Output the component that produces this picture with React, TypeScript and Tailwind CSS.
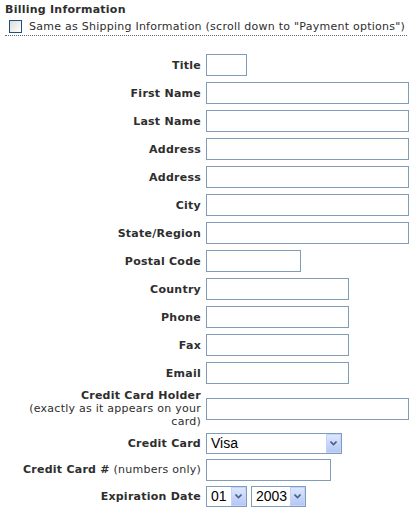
// Billing information form — XP-era checkout page, table-like label/field rows.

type Field = { label: string; width: string };

const textRows: Field[] = [
  { label: "Title", width: "w-[41px]" },
  { label: "First Name", width: "w-[203px]" },
  { label: "Last Name", width: "w-[203px]" },
  { label: "Address", width: "w-[203px]" },
  { label: "Address", width: "w-[203px]" },
  { label: "City", width: "w-[203px]" },
  { label: "State/Region", width: "w-[203px]" },
  { label: "Postal Code", width: "w-[95px]" },
  { label: "Country", width: "w-[143px]" },
  { label: "Phone", width: "w-[143px]" },
  { label: "Fax", width: "w-[143px]" },
  { label: "Email", width: "w-[143px]" },
];

function TextBox({ width }: { width: string }) {
  return <div className={`${width} h-[22px] border border-[#7f9db9] bg-white`} />;
}

function Chevron() {
  return (
    <svg width="7" height="5" viewBox="0 0 7 5" fill="none">
      <path d="M0.5 0.5 L3.5 3.5 L6.5 0.5" stroke="#4d6185" strokeWidth="1.6" />
    </svg>
  );
}

function SelectBox({ value, width }: { value: string; width: string }) {
  return (
    <div className={`${width} h-[21px] flex items-stretch border border-[#7f9db9] bg-white`}>
      <span className="flex-1 pl-[4px] text-[14px] leading-[19px] tracking-normal text-black font-['Liberation_Sans',Arial,sans-serif]">
        {value}
      </span>
      <span className="w-[15px] flex items-center justify-center border border-[#c3d3fd] bg-gradient-to-b from-[#dde6fd] to-[#b4c8f6]">
        <Chevron />
      </span>
    </div>
  );
}

function Row({ label, h, children }: { label: React.ReactNode; h: string; children: React.ReactNode }) {
  return (
    <div className={`flex items-center ${h}`}>
      <div className="w-[202px] pr-[1px] text-right">{label}</div>
      <div className="pl-[4px] flex items-center gap-[4px]">{children}</div>
    </div>
  );
}

export default function App() {
  return (
    <div className="w-[418px] h-[516px] bg-white text-[11px] leading-[13px] tracking-[0.25px] text-[#2e2e2e] font-['Verdana','DejaVu_Sans',sans-serif] overflow-hidden">
      <div className="px-[5px] pt-[3px]">
        <div className="font-bold">Billing Information</div>
        <div className="w-[402px] mt-[4px] pb-[2px] flex items-center border-b border-dotted border-[#666]">
          <span className="ml-[4px] w-[13px] h-[13px] border border-[#1c5180] bg-gradient-to-br from-[#dcdcd7] to-white" />
          <span className="ml-[7px]">Same as Shipping Information (scroll down to "Payment options")</span>
        </div>
      </div>

      <div className="mt-[15px]">
        {textRows.map((r, i) => (
          <Row key={i} h="h-[28px]" label={<b>{r.label}</b>}>
            <TextBox width={r.width} />
          </Row>
        ))}
        <Row
          h="h-[43px]"
          label={
            <>
              <b>Credit Card Holder</b>
              <br />
              (exactly as it appears on your
              <br />
              card)
            </>
          }
        >
          <TextBox width="w-[203px]" />
        </Row>
        <Row h="h-[26px]" label={<b>Credit Card</b>}>
          <SelectBox value="Visa" width="w-[136px]" />
        </Row>
        <Row h="h-[27px]" label={<><b>Credit Card #</b> (numbers only)</>}>
          <TextBox width="w-[125px]" />
        </Row>
        <Row h="h-[27px]" label={<b>Expiration Date</b>}>
          <SelectBox value="01" width="w-[41px]" />
          <SelectBox value="2003" width="w-[55px]" />
        </Row>
      </div>
    </div>
  );
}
